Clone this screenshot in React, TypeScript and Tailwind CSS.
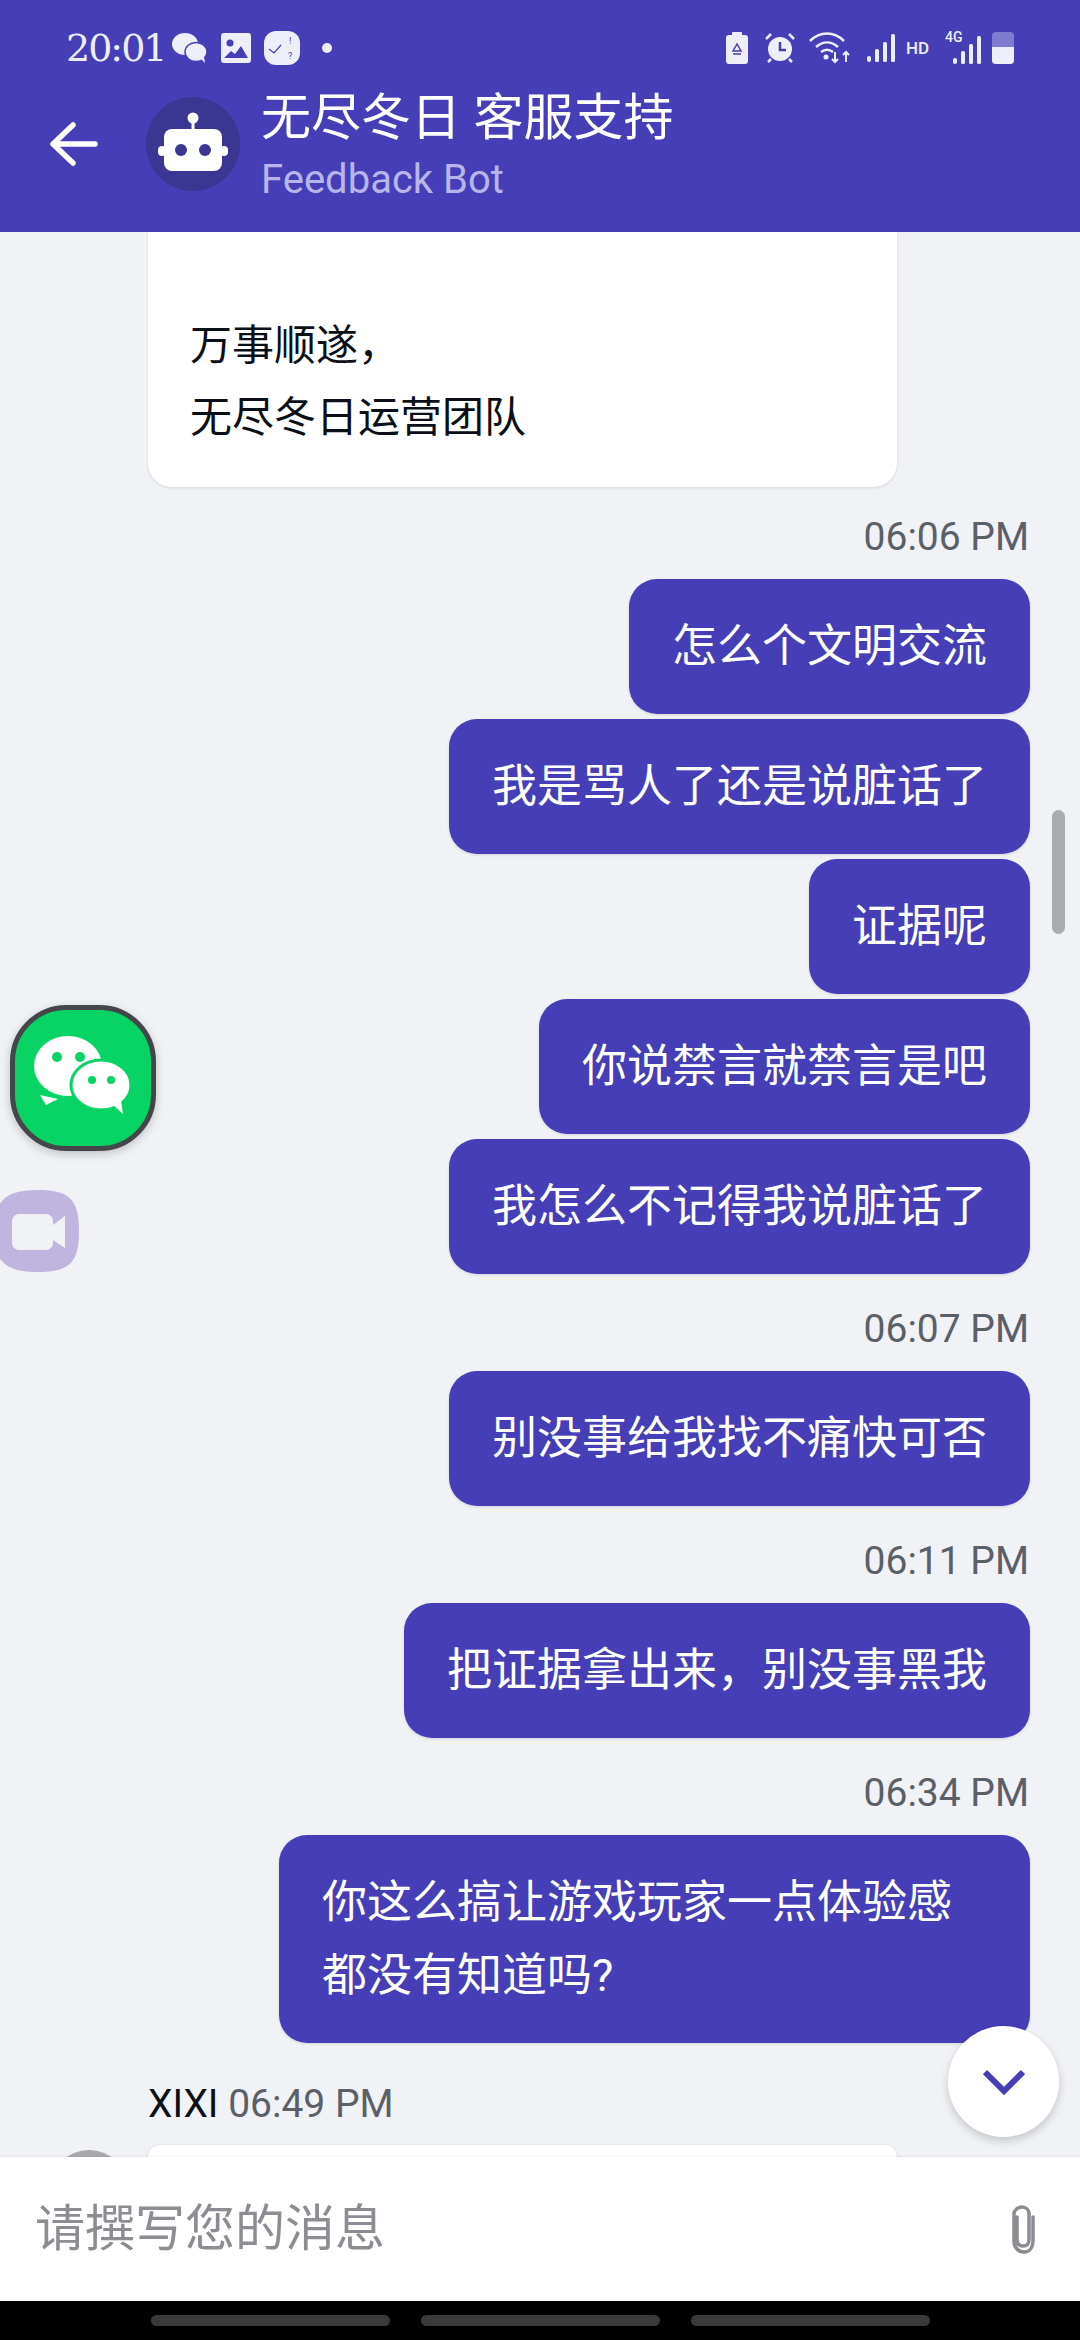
const font = "[font-family:Roboto,'Noto_Sans_CJK_SC',sans-serif]";

function Bubble({ text }: { text: string }) {
  return (
    <div className="self-end max-w-[751px] mb-[5px] px-[43px] py-[31px] rounded-[28px] bg-[#453eb6] text-white text-[45px] leading-[73px] shadow-[0_1px_3px_rgba(0,0,0,0.12)]">
      {text}
    </div>
  );
}

function Time({ text }: { text: string }) {
  return (
    <div className="self-end mr-[1px] h-[46px] mt-[27px] mb-[19px] text-[39px] leading-[46px] text-[#5b6068]">
      {text}
    </div>
  );
}

function RobotIcon() {
  return (
    <svg width="94" height="94" viewBox="0 0 94 94">
      <circle cx="47" cy="47" r="47" fill="#3a3692" />
      <circle cx="47" cy="21" r="5.5" fill="#fff" />
      <rect x="45.5" y="24" width="3" height="10" fill="#fff" />
      <rect x="18" y="32" width="58" height="42" rx="8" fill="#fff" />
      <rect x="12" y="49" width="8" height="10" rx="4" fill="#fff" />
      <rect x="74" y="49" width="8" height="10" rx="4" fill="#fff" />
      <circle cx="35" cy="53" r="6" fill="#3a3692" />
      <circle cx="59" cy="53" r="6" fill="#3a3692" />
    </svg>
  );
}

function StatusLeft() {
  return (
    <div className="flex items-center">
      <span className="[font-family:'DejaVu_Serif',serif] text-[38px] leading-[46px] text-[#eeeef9] tracking-[-2px] w-[108px] ml-[66px]">20:01</span>
      <svg width="36" height="32" viewBox="0 0 36 32" className="ml-[-2px]">
        <ellipse cx="13" cy="12" rx="13" ry="11" fill="#eeeef9" />
        <ellipse cx="24" cy="20" rx="11" ry="9.5" fill="#eeeef9" stroke="#453eb6" strokeWidth="1.5" />
        <path d="M29 27l4 4-1-6z" fill="#eeeef9" />
      </svg>
      <svg width="30" height="30" viewBox="0 0 30 30" className="ml-[13px]">
        <rect width="30" height="30" rx="3" fill="#eeeef9" />
        <circle cx="9" cy="10" r="3.5" fill="#453eb6" />
        <path d="M3 25l7-7 4 3 6-8 7 12z" fill="#453eb6" />
      </svg>
      <svg width="36" height="34" viewBox="0 0 36 34" className="ml-[13px]">
        <rect width="36" height="34" rx="12" fill="#eeeef9" />
        <path d="M5 18l5 4 7-8" stroke="#453eb6" strokeWidth="1.2" fill="none" />
        <text x="25" y="13" fontSize="9" fill="#453eb6">!</text>
        <text x="24" y="28" fontSize="9" fill="#453eb6">?</text>
      </svg>
      <span className="ml-[22px] w-[10px] h-[10px] rounded-full bg-[#eeeef9]" />
    </div>
  );
}

function Signal({ hd }: { hd?: boolean }) {
  return (
    <svg width="28" height="28" viewBox="0 0 28 28">
      <rect x="0" y="22" width="4" height="6" rx="2" fill="#eeeef9" />
      <rect x="8" y="15" width="4" height="13" rx="1.5" fill="#eeeef9" />
      <rect x="16" y={hd ? 8 : 8} width="4" height="20" rx="1.5" fill="#eeeef9" />
      <rect x="24" y="0" width="4" height="28" rx="1.5" fill="#eeeef9" />
    </svg>
  );
}

function StatusRight() {
  return (
    <div className="flex items-center h-[46px] mr-[66px]">
      <svg width="22" height="32" viewBox="0 0 22 32">
        <rect y="3" width="22" height="29" rx="3" fill="#eeeef9" />
        <rect x="6" y="0" width="10" height="4" rx="1" fill="#eeeef9" />
        <path d="M11 12l-4 7h8zM7 22h8" stroke="#453eb6" strokeWidth="1.5" fill="none" />
      </svg>
      <svg width="30" height="30" viewBox="0 0 30 30" className="ml-[17px]">
        <circle cx="15" cy="16" r="12" fill="#eeeef9" />
        <path d="M15 9v8h6" stroke="#453eb6" strokeWidth="2.5" fill="none" />
        <path d="M1 6l5-5M29 6l-5-5M6 26l-3 3M24 26l3 3" stroke="#eeeef9" strokeWidth="2.5" />
      </svg>
      <svg width="42" height="32" viewBox="0 0 42 32" className="ml-[14px]">
        <path d="M1 9c10-10 24-10 34 0M7 15c7-6 15-6 22 0M12 20c4-3 8-3 12 0" stroke="#eeeef9" strokeWidth="2.5" fill="none" />
        <circle cx="17" cy="25" r="2.5" fill="#eeeef9" />
        <path d="M26 20v10M23 27l3 3 3-3M37 30v-10M34 23l3-3 3 3" stroke="#eeeef9" strokeWidth="2" fill="none" />
      </svg>
      <div className="ml-[16px]"><Signal /></div>
      <span className="ml-[11px] text-[17px] leading-[20px] font-medium text-[#eeeef9] w-[26px]">HD</span>
      <div className="relative ml-[13px] w-[36px] h-[32px]">
        <span className="absolute left-0 top-[-3px] text-[14px] leading-[16px] font-medium text-[#eeeef9]">4G</span>
        <div className="absolute right-0 bottom-0"><Signal hd /></div>
      </div>
      <div className="relative ml-[11px] w-[22px] h-[32px] rounded-[4px] bg-[#7f7bcf]">
        <div className="absolute left-0 right-0 bottom-0 h-[17px] rounded-b-[4px] bg-[#eeeef9]" />
      </div>
    </div>
  );
}

function WeChatIcon() {
  return (
    <svg width="146" height="146" viewBox="0 0 146 146" className="absolute left-[10px] top-[1005px] drop-shadow-[0_3px_5px_rgba(0,0,0,0.2)]">
      <rect x="2.5" y="2.5" width="141" height="141" rx="54" fill="#08d365" stroke="#444649" strokeWidth="5" />
      <path d="M30 90l6 10 12-6z" fill="#fff" />
      <ellipse cx="58" cy="61" rx="34" ry="30" fill="#fff" />
      <ellipse cx="91" cy="80" rx="30" ry="25" fill="#fff" stroke="#08d365" strokeWidth="3" />
      <path d="M103 100l10 9-2-14z" fill="#fff" />
      <circle cx="47" cy="52" r="5" fill="#08d365" />
      <circle cx="70" cy="52" r="5" fill="#08d365" />
      <circle cx="82" cy="75" r="4" fill="#08d365" />
      <circle cx="101" cy="75" r="4" fill="#08d365" />
    </svg>
  );
}

function VideoIcon() {
  return (
    <svg width="80" height="82" viewBox="0 0 80 82" className="absolute left-0 top-[1190px]">
      <path d="M-6 41C-6 10 6 0 38 0s41 10 41 41-9 41-41 41S-6 72-6 41z" fill="#c0b5de" />
      <rect x="12" y="24" width="41" height="36" rx="7" fill="#f0f2f5" />
      <path d="M53 35l12-9v32l-12-8z" fill="#f0f2f5" />
    </svg>
  );
}

export default function App() {
  return (
    <div className={`relative w-[1080px] h-[2340px] flex flex-col overflow-hidden bg-[#f0f2f5] ${font}`}>
      <header className="h-[232px] shrink-0 bg-[#453eb6] flex flex-col">
        <div className="flex justify-between items-center pt-[25px] h-[71px]">
          <StatusLeft />
          <StatusRight />
        </div>
        <div className="flex items-center h-[161px]">
          <svg width="48" height="44" viewBox="0 0 48 44" className="ml-[50px] mb-[16px]" fill="none" stroke="#fff" strokeWidth="5.5" strokeLinecap="round" strokeLinejoin="round">
            <path d="M45 22H4M23 3L3 22l20 19" />
          </svg>
          <div className="ml-[48px] mb-[16px]"><RobotIcon /></div>
          <div className="ml-[21px] flex flex-col mb-[16px]">
            <div className="text-[50px] leading-[72px] text-white">无尽冬日 客服支持</div>
            <div className="text-[40px] leading-[52px] text-[#b7b5ea]">Feedback Bot</div>
          </div>
        </div>
      </header>

      <main className="relative flex-1 min-h-0 overflow-hidden flex flex-col pl-[148px] pr-[50px]">
        <div className="w-[749px] h-[255px] shrink-0 pl-[42px] pt-[78px] rounded-b-[24px] bg-white text-[#0b0f17] text-[42px] leading-[72px] shadow-[0_1px_3px_rgba(0,0,0,0.12)]">
          <div>万事顺遂，</div>
          <div>无尽冬日运营团队</div>
        </div>
        <Time text="06:06 PM" />
        <Bubble text="怎么个文明交流" />
        <Bubble text="我是骂人了还是说脏话了" />
        <Bubble text="证据呢" />
        <Bubble text="你说禁言就禁言是吧" />
        <Bubble text="我怎么不记得我说脏话了" />
        <Time text="06:07 PM" />
        <Bubble text="别没事给我找不痛快可否" />
        <Time text="06:11 PM" />
        <Bubble text="把证据拿出来，别没事黑我" />
        <Time text="06:34 PM" />
        <Bubble text="你这么搞让游戏玩家一点体验感都没有知道吗?" />
        <div className="mt-[33px] text-[39px] leading-[46px] text-[#5b6068]">
          <span className="text-[#0b0f17]">XIXI</span> 06:49 PM
        </div>
        <div className="mt-[18px] w-[749px] h-[40px] rounded-t-[24px] bg-white shadow-[0_1px_3px_rgba(0,0,0,0.2)]" />
      </main>

      <div className="absolute left-[50px] top-[2150px] w-[78px] h-[78px] rounded-full bg-[#a9a9ad]" />
      <WeChatIcon />
      <VideoIcon />
      <div className="absolute left-[1052px] top-[810px] w-[13px] h-[124px] rounded-full bg-[#a9abae]" />
      <div className="absolute left-[948px] top-[2026px] w-[111px] h-[111px] rounded-full bg-white flex items-center justify-center shadow-[0_4px_10px_rgba(0,0,0,0.18)]">
        <svg width="42" height="26" viewBox="0 0 42 26" fill="none" stroke="#453eb6" strokeWidth="6">
          <path d="M2 3l19 19L40 3" />
        </svg>
      </div>

      <footer className="relative h-[144px] shrink-0 bg-white flex items-center justify-between pl-[35px] pr-[40px] shadow-[0_-1px_2px_rgba(0,0,0,0.06)]">
        <span className="text-[50px] leading-[60px] text-[#8b8d92]">请撰写您的消息</span>
        <svg width="34" height="50" viewBox="0 0 34 50" fill="none" stroke="#8b8d92" strokeWidth="3.5" strokeLinecap="round">
          <path d="M10 14v22a7 7 0 0 0 14 0V10a8 8 0 0 0-16 0" opacity="0" />
          <path d="M11 13v23c0 4 2.500 6 6 6s6-2 6-6V10c0-4-3-7-7-7s-8 3-8 7v27c0 6 4 11 10 11s9-5 9-11V13" />
        </svg>
      </footer>

      <div className="h-[39px] shrink-0 bg-black flex items-start justify-center gap-[31px] pt-[14px]">
        <div className="w-[239px] h-[11px] rounded-full bg-[#3a3a3a]" />
        <div className="w-[239px] h-[11px] rounded-full bg-[#3a3a3a]" />
        <div className="w-[239px] h-[11px] rounded-full bg-[#3a3a3a]" />
      </div>
    </div>
  );
}
